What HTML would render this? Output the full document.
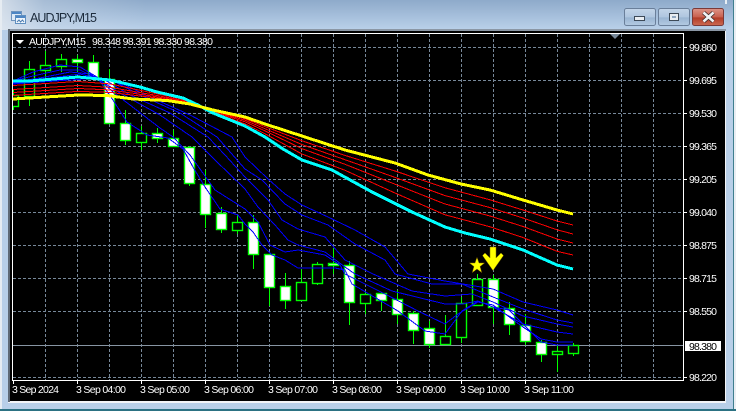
<!DOCTYPE html>
<html><head><meta charset="utf-8"><title>AUDJPY,M15</title>
<style>
html,body{margin:0;padding:0;width:736px;height:411px;overflow:hidden;background:#b8cfe8}
svg{display:block}
text{font-family:"Liberation Sans",sans-serif;font-size:10.500px;fill:#fff}
.cr{shape-rendering:crispEdges}
</style></head><body>
<svg width="736" height="411" viewBox="0 0 736 411" xmlns="http://www.w3.org/2000/svg">
<defs>
<linearGradient id="tb" x1="0" y1="0" x2="0" y2="1"><stop offset="0" stop-color="#8eaaca"/><stop offset="1" stop-color="#bad1ea"/></linearGradient>
<linearGradient id="gl" x1="0" y1="0" x2="1" y2="0"><stop offset="0" stop-color="#e8ecf1" stop-opacity=".75"/><stop offset=".06" stop-color="#dfe6ee" stop-opacity=".3"/><stop offset=".2" stop-color="#dfe6ee" stop-opacity="0"/></linearGradient>
<linearGradient id="bn" x1="0" y1="0" x2="0" y2="1"><stop offset="0" stop-color="#c3d5e9"/><stop offset=".5" stop-color="#afc6df"/><stop offset=".55" stop-color="#9ab5d2"/><stop offset="1" stop-color="#b4cbe3"/></linearGradient>
<linearGradient id="cl" x1="0" y1="0" x2="0" y2="1"><stop offset="0" stop-color="#dc9488"/><stop offset=".5" stop-color="#c9604f"/><stop offset=".55" stop-color="#b23c28"/><stop offset="1" stop-color="#cc6a52"/></linearGradient>
<clipPath id="c"><rect x="13" y="34" width="670" height="346"/></clipPath>
</defs>
<rect width="736" height="411" fill="#b8cfe8"/>
<rect width="736" height="30" fill="url(#tb)"/>
<rect width="736" height="30" fill="url(#gl)"/>
<rect x="0" y="0" width="2" height="411" fill="#e6ecf2"/>
<rect x="733" y="0" width="1" height="411" fill="#3f7f8e"/>
<rect x="734" y="0" width="2" height="411" fill="#e9eef3"/>
<rect x="0" y="409" width="736" height="2" fill="#2c7283"/>
<rect x="725" y="0" width="2" height="4" fill="#e8eef4"/>
<rect x="8" y="29" width="718" height="374" fill="#f2f4f7"/>
<rect x="8" y="29" width="718" height="2" fill="#8b97a5"/>
<rect x="8" y="29" width="2" height="373" fill="#5f6a76"/>
<rect x="10" y="31" width="715" height="370" fill="#000"/>

<!-- title icon -->
<rect x="11.500" y="11.500" width="10" height="9" fill="#dce9f6" stroke="#6f94bd"/>
<rect x="15.500" y="15.500" width="10" height="8" fill="#eef5fb" stroke="#5f8fc0"/>
<path d="M12 13h9M16 17h9" stroke="#4d86c4" stroke-width="2"/>
<path d="M17 22l2-2 1.500 2 2-2 1.500 2" stroke="#4a7bb0" fill="none"/>
<text x="30" y="22" textLength="67" lengthAdjust="spacing" style="font-size:12.500px;fill:#1c2b3c">AUDJPY,M15</text>

<!-- window buttons -->
<rect x="624.500" y="8.500" width="31" height="17" rx="2" fill="url(#bn)" stroke="#6a7f9a"/>
<rect x="634.500" y="16.500" width="10" height="4" fill="#e8edf2" stroke="#3d4a58"/>
<rect x="658.500" y="8.500" width="31" height="17" rx="2" fill="url(#bn)" stroke="#6a7f9a"/>
<rect x="669.500" y="13.500" width="9" height="7" fill="#e8edf2" stroke="#3d4a58"/>
<rect x="672" y="16" width="4" height="2" fill="#90a8c2"/>
<rect x="692.500" y="8.500" width="31" height="17" rx="2" fill="url(#cl)" stroke="#7b3a38"/>
<path d="M703.500 12.500l10 9M713.500 12.500l-10 9" stroke="#3b2a2a" stroke-width="4.200"/>
<path d="M703.500 12.500l10 9M713.500 12.500l-10 9" stroke="#f0f2f4" stroke-width="2.600"/>

<!-- grid -->
<g class="cr" stroke="#778899" stroke-width="1" stroke-dasharray="3 2" fill="none">
<path d="M13 47.500H683M13 80.500H683M13 113.500H683M13 146.500H683M13 179.500H683M13 212.500H683M13 245.500H683M13 278.500H683M13 311.500H683M13 377.500H683"/>
<path d="M45.500 34V380M77.500 34V380M109.500 34V380M141.500 34V380M173.500 34V380M205.500 34V380M237.500 34V380M269.500 34V380M301.500 34V380M333.500 34V380M365.500 34V380M397.500 34V380M429.500 34V380M461.500 34V380M493.500 34V380M525.500 34V380M557.500 34V380M589.500 34V380M621.500 34V380M653.500 34V380"/>
</g>
<path d="M610 34h10l-5 5z" fill="#778899"/>
<path class="cr" d="M13 345.500H683" stroke="#8795a3" stroke-width="1"/>

<g clip-path="url(#c)">
<!-- wicks -->
<path class="cr" stroke="#00ff00" stroke-width="1" fill="none" d="M13.500 90V110M29.500 61V106M45.500 51V79M61.500 54V72M77.500 55V72M93.500 55V78M109.500 69V124M125.500 110V145M141.500 126V150M157.500 128V143M173.500 130V146M189.500 146V186M205.500 170V228M221.500 207V233M237.500 215V234M253.500 215V269M269.500 254V306M285.500 273V309M301.500 269V300M317.500 262V285M333.500 248V274M349.500 261V325M365.500 292V314M381.500 292V311M397.500 290V324M413.500 311V344M429.500 321V348M445.500 315V344M461.500 297V343M477.500 274V305M493.500 275V324M509.500 302V335M525.500 314V345M541.500 340V362M557.500 345V372M573.500 343V356"/>
<!-- black bodies -->
<g fill="#000" stroke="#00ff00" stroke-width="1.400">
<rect x="8.500" y="95.500" width="10" height="11"/>
<rect x="24.500" y="69.500" width="10" height="27"/>
<rect x="40.500" y="65.500" width="10" height="5"/>
<rect x="56.500" y="59.500" width="10" height="7"/>
<rect x="136.500" y="133.500" width="10" height="9"/>
<rect x="232.500" y="222.500" width="10" height="8"/>
<rect x="296.500" y="282.500" width="10" height="18"/>
<rect x="312.500" y="264.500" width="10" height="19"/>
<rect x="360.500" y="294.500" width="10" height="9"/>
<rect x="440.500" y="336.500" width="10" height="8"/>
<rect x="456.500" y="303.500" width="10" height="34"/>
<rect x="472.500" y="279.500" width="10" height="26"/>
<rect x="552.500" y="351.500" width="10" height="3"/>
<rect x="568.500" y="345.500" width="10" height="8"/>
</g>
<!-- white bodies -->
<g fill="#fff" stroke="#00ff00" stroke-width="1.400">
<rect x="72.500" y="59.500" width="10" height="3"/>
<rect x="88.500" y="62.500" width="10" height="16"/>
<rect x="104.500" y="79.500" width="10" height="44"/>
<rect x="120.500" y="123.500" width="10" height="17"/>
<rect x="152.500" y="133.500" width="10" height="5"/>
<rect x="168.500" y="138.500" width="10" height="8"/>
<rect x="184.500" y="147.500" width="10" height="36"/>
<rect x="200.500" y="184.500" width="10" height="30"/>
<rect x="216.500" y="213.500" width="10" height="16"/>
<rect x="248.500" y="222.500" width="10" height="32"/>
<rect x="264.500" y="254.500" width="10" height="33"/>
<rect x="280.500" y="286.500" width="10" height="14"/>
<rect x="328.500" y="263.500" width="10" height="2"/>
<rect x="344.500" y="265.500" width="10" height="37"/>
<rect x="376.500" y="293.500" width="10" height="7"/>
<rect x="392.500" y="299.500" width="10" height="15"/>
<rect x="408.500" y="313.500" width="10" height="17"/>
<rect x="424.500" y="328.500" width="10" height="16"/>
<rect x="488.500" y="279.500" width="10" height="28"/>
<rect x="504.500" y="308.500" width="10" height="16"/>
<rect x="520.500" y="325.500" width="10" height="16"/>
<rect x="536.500" y="342.500" width="10" height="12"/>
</g>
<!-- blue -->
<g class="cr" fill="none" stroke="#0000ff" stroke-width="1">
<polyline points="13,81 33,72 60,65 80,67 97,77 113,100 127,122 147,135 168,138 183,149 193,167 205,187 220,209 238,215 245,224 253,232 262,245 272,255 285,260 298,268 335,268 345,270 352,284 398,311 425,331 445,334 462,311 478,301 493,307 509,310 525,326 541,342 557,345 573,345"/>
<polyline points="13,81 33,76 60,70 80,70 100,80 113,92 143,115 160,128 173,137 190,155 215,190 245,209 258,222 270,245 285,252 298,250 325,255 340,265 345,274 385,294 418,311 445,324 458,314 478,302 493,305 523,327 541,339 557,342 573,342"/>
<polyline points="13,82 40,78 70,72 90,74 120,93 160,115 192,137 215,160 245,189 258,207 275,225 288,240 298,245 325,252 345,267 355,274 392,291 445,304 462,304 478,301 493,307 523,324 557,332 573,334"/>
<polyline points="13,82 50,78 80,74 105,80 130,95 170,113 208,137 225,155 245,177 268,200 282,220 298,229 325,237 345,260 373,274 412,291 445,296 472,294 493,302 523,316 557,324 573,327"/>
<polyline points="13,83 60,80 90,76 115,82 140,95 180,113 217,137 245,169 262,180 285,204 302,215 328,225 355,244 385,260 395,274 432,284 462,284 493,297 523,309 557,320 573,323"/>
<polyline points="13,84 70,80 100,78 125,85 150,97 190,115 232,137 245,157 268,179 285,194 302,205 328,217 355,230 385,247 408,274 445,281 493,289 523,302 557,310 573,315"/>
</g>
<!-- red -->
<g class="cr" fill="none" stroke="#ff0000" stroke-width="1">
<polyline points="13,95.400 78,91.400 110,92.400 157,98 183,102 213,110.600 245,118.800 265,126.600 302,140.800 345,155.400 395,171 445,187.800 490,199.800 523,210 557,221 573,225"/>
<polyline points="13,92.500 78,88.500 110,89.900 157,96.800 183,101.200 213,111.100 245,120.200 265,128.700 302,144.600 345,159.700 395,177.400 445,195.600 490,207.600 523,218 557,229.800 573,234"/>
<polyline points="13,89.500 78,85.500 110,87.300 157,95.500 183,100.400 213,111.600 245,121.800 265,130.900 302,148.700 345,164.300 395,184.200 445,204 490,216 523,226.500 557,239 573,243"/>
<polyline points="13,85.500 78,81.500 110,83.900 157,93.900 183,99.300 213,112.300 245,123.800 265,133.800 302,154 345,170.300 395,193 445,214.800 490,226.800 523,237.500 557,251.300 573,255"/>
</g>
<!-- cyan -->
<polyline class="cr" fill="none" stroke="#00ffff" stroke-width="3" points="13,81 30,81 78,77 110,80 140,87 157,92 183,98 198,105 213,113 245,126 265,137 283,149 302,160 332,170 372,192 412,212 445,227 465,233 490,239 523,250 557,265 573,269"/>
<!-- yellow -->
<polyline class="cr" fill="none" stroke="#ffff00" stroke-width="3" points="13,99 62,96 78,95 107,95.500 133,99 167,100.500 190,104 213,110 245,117 265,124 305,137 345,150 395,163 428,175 461,184 490,190 523,200 557,210 573,214"/>
<!-- star + arrow -->
<path d="M477 257.500l2 5.500h5.500l-4.500 3.500 1.700 6-4.700-3.500-4.700 3.500 1.700-6-4.500-3.500h5.500z" fill="#ffff00" stroke="#8a6a00" stroke-width=".5"/>
<path d="M490 247h6v11l5-5 2.500 2.500-10.500 15-10.500-15 2.500-2.500 5 5z" fill="#ffff00" stroke="#807000" stroke-width=".5"/>
</g>

<!-- frame -->
<path class="cr" d="M12.500 33.500H683.500V380.500H12.500Z" fill="none" stroke="#fff" stroke-width="1"/>
<path class="cr" stroke="#fff" stroke-width="1" d="M683 47.500h4M683 80.500h4M683 113.500h4M683 146.500h4M683 179.500h4M683 212.500h4M683 245.500h4M683 278.500h4M683 311.500h4M683 377.500h4M13.500 380v4M77.500 380v4M141.500 380v4M205.500 380v4M269.500 380v4M333.500 380v4M397.500 380v4M461.500 380v4M525.500 380v4"/>

<!-- header -->
<path d="M16 40h8l-4 4z" fill="#fff"/>
<text x="29" y="45" textLength="57" lengthAdjust="spacing">AUDJPY,M15</text>
<text x="92" y="45" textLength="121" lengthAdjust="spacing">98.348 98.391 98.330 98.380</text>

<!-- price axis -->
<text x="689" y="51" textLength="28" lengthAdjust="spacing">99.860</text>
<text x="689" y="84" textLength="28" lengthAdjust="spacing">99.695</text>
<text x="689" y="117" textLength="28" lengthAdjust="spacing">99.530</text>
<text x="689" y="150" textLength="28" lengthAdjust="spacing">99.365</text>
<text x="689" y="183" textLength="28" lengthAdjust="spacing">99.205</text>
<text x="689" y="216" textLength="28" lengthAdjust="spacing">99.040</text>
<text x="689" y="249" textLength="28" lengthAdjust="spacing">98.875</text>
<text x="689" y="282" textLength="28" lengthAdjust="spacing">98.715</text>
<text x="689" y="315" textLength="28" lengthAdjust="spacing">98.550</text>
<rect x="685" y="341" width="36" height="10" fill="#fff"/>
<text x="689" y="350" textLength="28" lengthAdjust="spacing" style="fill:#000">98.380</text>
<text x="689" y="381" textLength="28" lengthAdjust="spacing">98.220</text>

<!-- time axis -->
<text x="12" y="393" textLength="47" lengthAdjust="spacing">3 Sep 2024</text>
<text x="76" y="393" textLength="50" lengthAdjust="spacing">3 Sep 04:00</text>
<text x="140" y="393" textLength="50" lengthAdjust="spacing">3 Sep 05:00</text>
<text x="204" y="393" textLength="50" lengthAdjust="spacing">3 Sep 06:00</text>
<text x="268" y="393" textLength="50" lengthAdjust="spacing">3 Sep 07:00</text>
<text x="332" y="393" textLength="50" lengthAdjust="spacing">3 Sep 08:00</text>
<text x="396" y="393" textLength="50" lengthAdjust="spacing">3 Sep 09:00</text>
<text x="460" y="393" textLength="50" lengthAdjust="spacing">3 Sep 10:00</text>
<text x="524" y="393" textLength="50" lengthAdjust="spacing">3 Sep 11:00</text>
</svg>
</body></html>
